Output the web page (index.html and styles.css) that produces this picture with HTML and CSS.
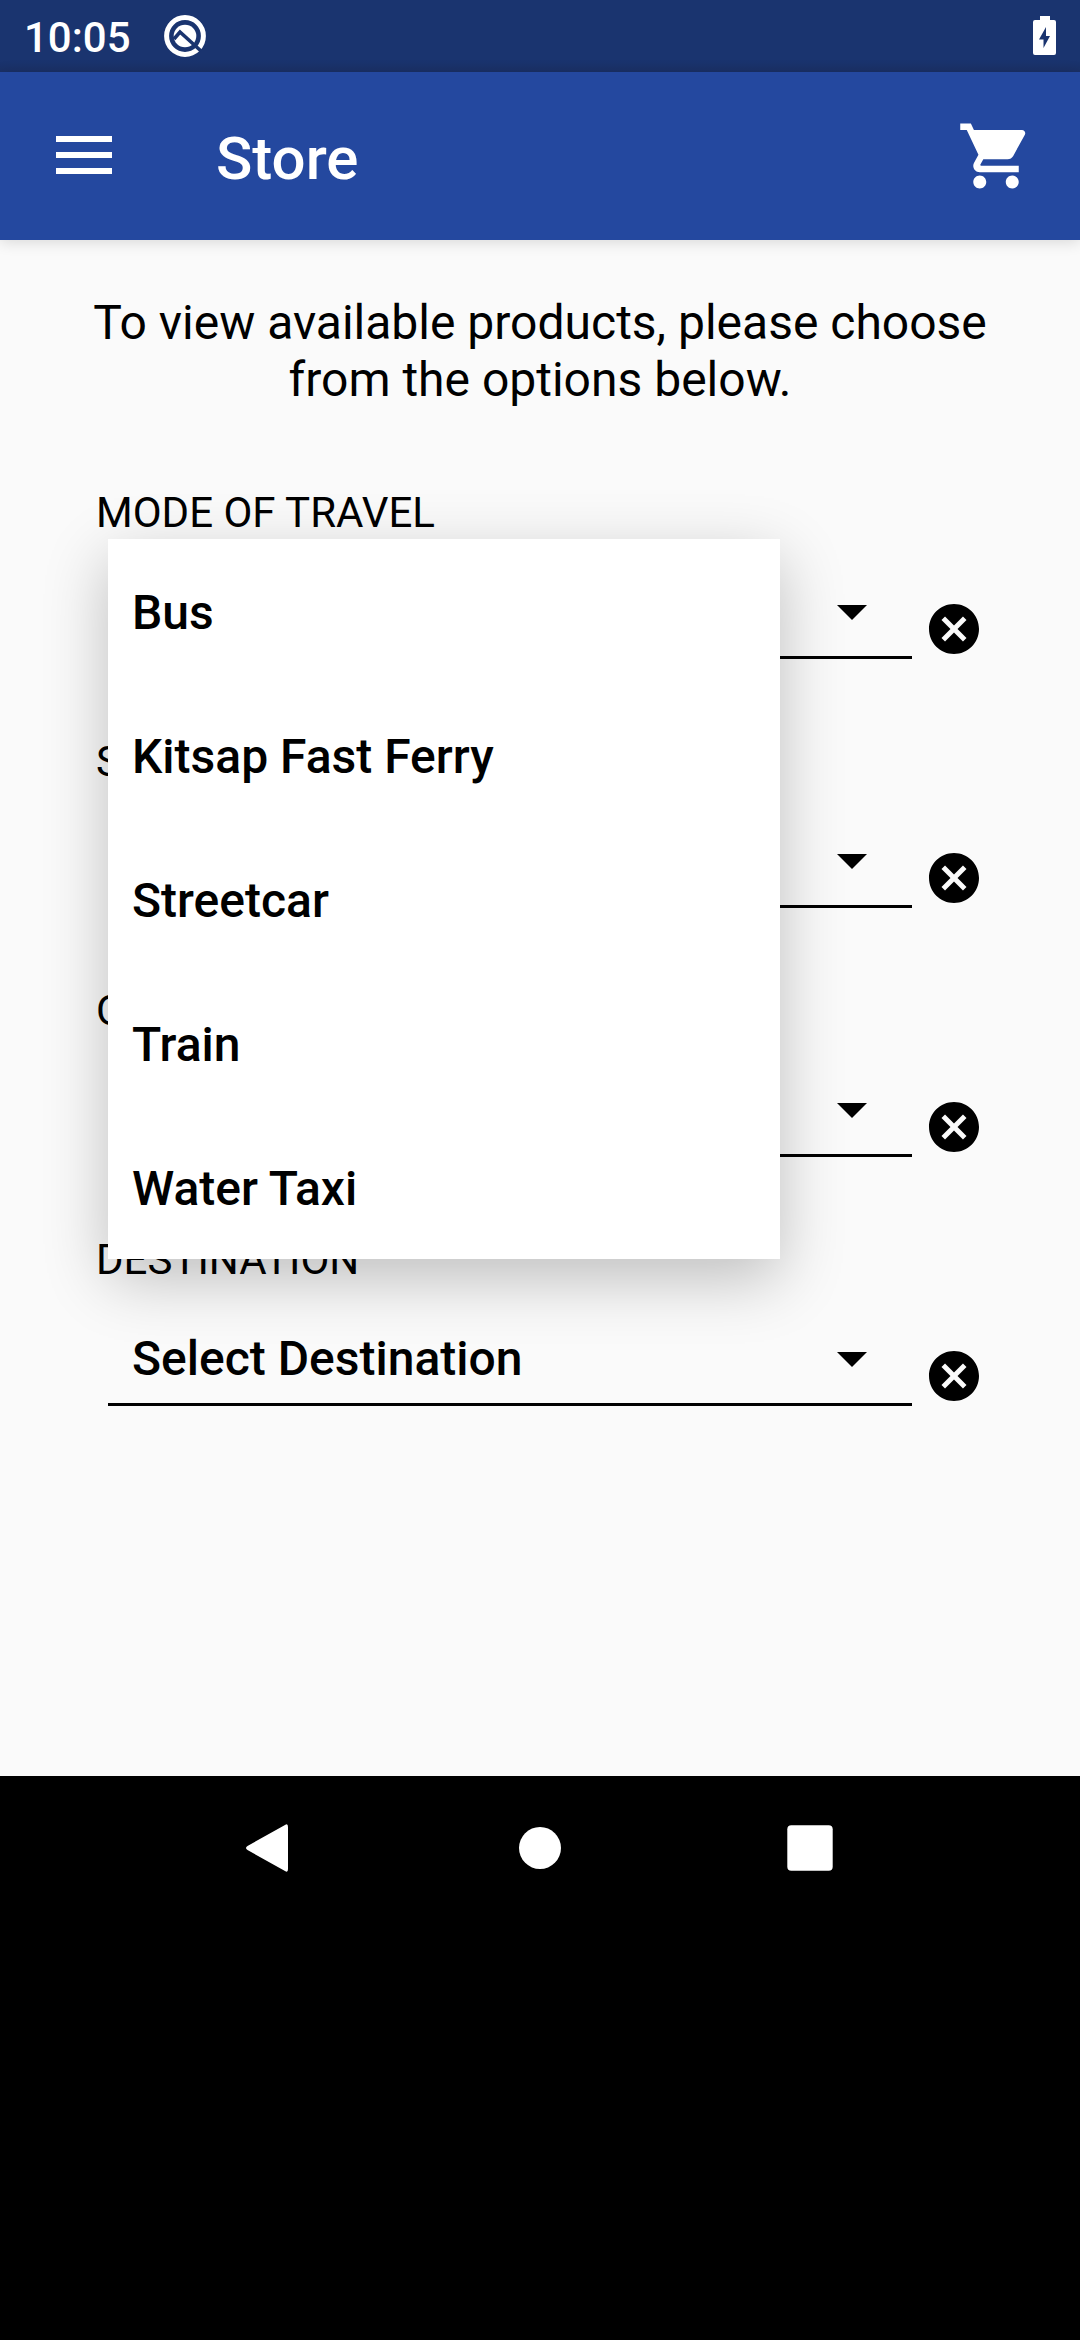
FILE: index.html
```html
<!DOCTYPE html>
<html lang="en">
<head>
<meta charset="utf-8">
<title>Store</title>
<link rel="stylesheet" href="styles.css">
</head>
<body>
<div class="screen">
  <header class="status">
    <span class="clock">10:05</span>
    <svg class="q" viewBox="0 0 44 44"><circle cx="22" cy="22" r="18.4" fill="none" stroke="#fff" stroke-width="5"/><circle cx="22" cy="22" r="11.3" fill="#fff"/><path d="M11 25l6-7 21 19" fill="none" stroke="#1a346f" stroke-width="3.6"/></svg>
    <svg class="battery" viewBox="0 0 23 39"><path fill="#fff" fill-rule="evenodd" d="M7 0h10v4h4a2 2 0 0 1 2 2v31a2 2 0 0 1-2 2H2a2 2 0 0 1-2-2V6a2 2 0 0 1 2-2h5zM13 11L6 23.500h4.500V32L17 20h-4z"/></svg>
  </header>
  <nav class="appbar">
    <svg class="menu-icon" viewBox="0 0 56 38"><path fill="#fff" d="M0 0h56v6H0zM0 16h56v6H0zM0 32h56v6H0z"/></svg>
    <h1 class="title">Store</h1>
    <svg class="cart" viewBox="0 0 24 24"><path fill="#fff" d="M7 18c-1.100 0-1.990.9-1.990 2S5.900 22 7 22s2-.9 2-2-.9-2-2-2zM1 2v2h2l3.600 7.590-1.350 2.450c-.16.280-.25.610-.25.960 0 1.100.9 2 2 2h12v-2H7.420c-.14 0-.25-.11-.25-.25l.03-.12.900-1.630h7.450c.75 0 1.410-.41 1.750-1.030l3.580-6.490c.08-.14.12-.31.12-.48 0-.55-.45-1-1-1H5.210l-.94-2H1zm16 16c-1.100 0-1.990.9-1.990 2s.89 2 1.990 2 2-.9 2-2-.9-2-2-2z"/></svg>
  </nav>
  <main class="content">
    <p class="intro">To view available products, please choose<br>from the options below.</p>
    <section class="form">
      <div class="field">
        <div class="label">MODE OF TRAVEL</div>
        <div class="row"><div class="select"><span></span><i class="arrow"></i></div><svg class="clear" viewBox="0 0 24 24"><path d="M12 2C6.470 2 2 6.470 2 12s4.470 10 10 10 10-4.470 10-10S17.530 2 12 2zm5 13.590L15.590 17 12 13.410 8.410 17 7 15.590 10.590 12 7 8.410 8.410 7 12 10.590 15.590 7 17 8.410 13.410 12 17 15.590z"/></svg></div>
      </div>
      <div class="field">
        <div class="label">S</div>
        <div class="row"><div class="select"><span></span><i class="arrow"></i></div><svg class="clear" viewBox="0 0 24 24"><path d="M12 2C6.470 2 2 6.470 2 12s4.470 10 10 10 10-4.470 10-10S17.530 2 12 2zm5 13.590L15.590 17 12 13.410 8.410 17 7 15.590 10.590 12 7 8.410 8.410 7 12 10.590 15.590 7 17 8.410 13.410 12 17 15.590z"/></svg></div>
      </div>
      <div class="field">
        <div class="label">O</div>
        <div class="row"><div class="select"><span></span><i class="arrow"></i></div><svg class="clear" viewBox="0 0 24 24"><path d="M12 2C6.470 2 2 6.470 2 12s4.470 10 10 10 10-4.470 10-10S17.530 2 12 2zm5 13.590L15.590 17 12 13.410 8.410 17 7 15.590 10.590 12 7 8.410 8.410 7 12 10.590 15.590 7 17 8.410 13.410 12 17 15.590z"/></svg></div>
      </div>
      <div class="field">
        <div class="label">DESTINATION</div>
        <div class="row"><div class="select"><span>Select Destination</span><i class="arrow"></i></div><svg class="clear" viewBox="0 0 24 24"><path d="M12 2C6.470 2 2 6.470 2 12s4.470 10 10 10 10-4.470 10-10S17.530 2 12 2zm5 13.590L15.590 17 12 13.410 8.410 17 7 15.590 10.590 12 7 8.410 8.410 7 12 10.590 15.590 7 17 8.410 13.410 12 17 15.590z"/></svg></div>
      </div>
      <ul class="dropdown">
        <li>Bus</li>
        <li>Kitsap Fast Ferry</li>
        <li>Streetcar</li>
        <li>Train</li>
        <li>Water Taxi</li>
      </ul>
    </section>
  </main>
  <footer class="navbar">
    <svg viewBox="0 0 48 48"><path fill="#fff" d="M1.500 22L39 1q3-2 3 2v42q0 4-3 2L1.500 26q-3-2 0-4z"/></svg>
    <svg viewBox="0 0 48 48"><circle cx="24" cy="24" r="21" fill="#fff"/></svg>
    <svg viewBox="0 0 48 48"><rect x="1.300" y="1.300" width="45.400" height="45.400" rx="4" fill="#fff"/></svg>
  </footer>
</div>
</body>
</html>
```

FILE: styles.css
```css
* { box-sizing: border-box; }
body { margin: 0; background: #000; font-family: Roboto, sans-serif; color: #000; }
svg { display: block; flex: none; }
.screen { width: 1080px; height: 2340px; display: flex; flex-direction: column; background: #000; overflow: hidden; }

.status { height: 72px; flex: none; display: flex; align-items: flex-start; padding-right: 24px; background: linear-gradient(#1a346f 60px, #1a3066); color: #fff; }
.clock { width: 163px; padding: 13px 0 0 24px; font-size: 42px; line-height: 50px; font-weight: 500; }
.q { width: 44px; height: 44px; margin-top: 13.500px; }
.battery { width: 23px; height: 39px; margin: 16px 0 0 auto; }

.appbar { position: relative; z-index: 1; height: 168px; flex: none; display: flex; align-items: flex-start; padding: 0 45px 0 56px; background: #24489f; color: #fff; box-shadow: 0 2px 14px rgba(0, 0, 0, .14); }
.menu-icon { width: 56px; height: 38px; margin-top: 64px; }
.title { margin: 52px auto 0 104px; font-size: 60px; line-height: 70px; font-weight: 500; }
.cart { width: 78px; height: 78px; margin-top: 44.500px; }

.content { height: 1536px; flex: none; padding-top: 54px; background: #fafafa; }
.intro { margin: 0; text-align: center; font-size: 48px; line-height: 57px; }
.form { position: relative; margin-top: 80px; padding-left: 96px; }
.field { height: 249px; }
.label { font-size: 42px; line-height: 50px; }
.row { display: flex; align-items: flex-end; gap: 12px; padding-left: 12px; }
.select { width: 804px; height: 121px; display: flex; justify-content: space-between; padding: 45px 45px 0 24px; border-bottom: 3px solid #000; font-size: 48px; line-height: 57px; font-weight: 500; }
.arrow { width: 30px; height: 15px; margin-top: 22px; background: #000; clip-path: polygon(0 0, 100% 0, 50% 100%); }
.clear { width: 60px; height: 60px; }

.dropdown { position: absolute; left: 108px; top: 51px; width: 672px; margin: 0; padding: 0; list-style: none; background: #fff; box-shadow: 0 20px 60px rgba(0, 0, 0, .24); font-size: 48px; font-weight: 500; }
.dropdown li { height: 144px; padding: 45px 24px 0; line-height: 57px; }

.navbar { display: flex; justify-content: center; gap: 222px; padding-top: 48px; }
.navbar svg { width: 48px; height: 48px; }
```
